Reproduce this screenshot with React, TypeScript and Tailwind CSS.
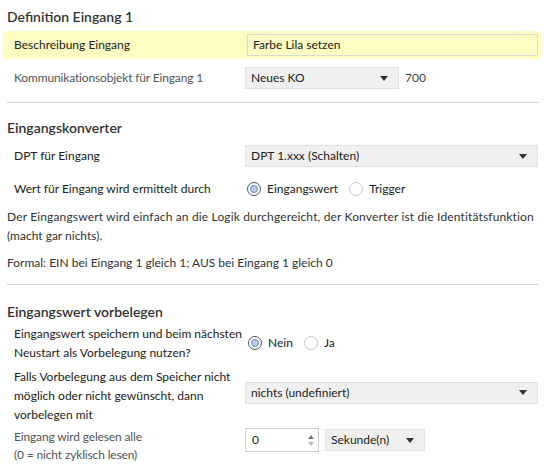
import React from "react";

const font = { fontFamily: 'Lato, "Open Sans", sans-serif' };

function Arrow() {
  return (
    <svg width="8" height="5" viewBox="0 0 8 5" className="shrink-0">
      <path d="M0 0 L8 0 L4 5 Z" fill="#333" />
    </svg>
  );
}

function Select({ text, w }: { text: string; w: string }) {
  return (
    <div className={`${w} h-[22px] flex items-center justify-between bg-[#f0f0f0] border border-[#e2e2e2] pl-[5px] pr-[10px] text-[#222] whitespace-nowrap`}>
      <span>{text}</span>
      <Arrow />
    </div>
  );
}

function Radio({ checked, label }: { checked?: boolean; label: string }) {
  return (
    <div className="flex items-center gap-[6px]">
      {checked ? (
        <div className="w-[14px] h-[14px] rounded-full border border-[#4a5670] bg-white flex items-center justify-center">
          <div className="w-[8px] h-[8px] rounded-full bg-[#b7c9e6] border border-[#6d8cc4]" />
        </div>
      ) : (
        <div className="w-[14px] h-[14px] rounded-full border border-[#c8c8c8] bg-white" />
      )}
      <span className="text-[#222]">{label}</span>
    </div>
  );
}

export default function App() {
  return (
    <div className="w-[544px] h-[469px] bg-white overflow-hidden pt-[7px] text-[12px]" style={font}>
      <div className="pl-[7px] h-[20px] leading-[20px] text-[14px] font-semibold text-[#333]">Definition Eingang 1</div>

      <div className="mt-[4px] mx-[3px] h-[28px] rounded-[3px] bg-[#fdfcc3] flex items-center">
        <div className="w-[244px] pl-[11px] text-[#222] whitespace-nowrap">Beschreibung Eingang</div>
        <div className="w-[291px] h-[22px] border border-[#dcdcd0] flex items-center pl-[5px] text-[#222]">Farbe Lila setzen</div>
      </div>

      <div className="mt-[5px] mx-[3px] h-[28px] flex items-center">
        <div className="w-[242px] pl-[11px] text-[#555] whitespace-nowrap tracking-[-0.15px]">Kommunikationsobjekt für Eingang 1</div>
        <Select text="Neues KO" w="w-[154px]" />
        <span className="ml-[6px] text-[#444]">700</span>
      </div>

      <div className="mt-[10px] mx-[7px] h-px bg-[#d2d2d2] w-[531px]" />

      <div className="mt-[15px] pl-[7px] h-[20px] leading-[20px] text-[14px] font-semibold text-[#333]">Eingangskonverter</div>

      <div className="mt-[4px] mx-[3px] h-[28px] flex items-center">
        <div className="w-[242px] pl-[11px] text-[#222] whitespace-nowrap">DPT für Eingang</div>
        <Select text="DPT 1.xxx (Schalten)" w="w-[293px]" />
      </div>

      <div className="mt-[5px] mx-[3px] h-[28px] flex items-center">
        <div className="w-[244px] pl-[11px] text-[#222] whitespace-nowrap">Wert für Eingang wird ermittelt durch</div>
        <div className="flex items-center gap-[11px]">
          <Radio checked label="Eingangswert" />
          <Radio label="Trigger" />
        </div>
      </div>

      <div className="mt-[4px] px-[7px] leading-[19px] text-[#333] whitespace-nowrap">
        <span className="tracking-[0.15px]">Der Eingangswert wird einfach an die Logik durchgereicht, der Konverter ist die Identitätsfunktion</span>
        <br />
        (macht gar nichts).
      </div>

      <div className="mt-[8px] px-[7px] leading-[19px] text-[#333] whitespace-nowrap">
        Formal: EIN bei Eingang 1 gleich 1; AUS bei Eingang 1 gleich 0
      </div>

      <div className="mt-[12px] mx-[7px] h-px bg-[#d2d2d2] w-[531px]" />

      <div className="mt-[17px] pl-[7px] h-[20px] leading-[20px] text-[14px] font-semibold text-[#333]">Eingangswert vorbelegen</div>

      <div className="mt-[2px] mx-[3px] flex items-center">
        <div className="w-[245px] pl-[11px] leading-[19px] text-[#222] whitespace-nowrap">
          Eingangswert speichern und beim nächsten
          <br />
          Neustart als Vorbelegung nutzen?
        </div>
        <div className="flex items-center gap-[11px]">
          <Radio checked label="Nein" />
          <Radio label="Ja" />
        </div>
      </div>

      <div className="mt-[5px] mx-[3px] flex items-center">
        <div className="w-[242px] pl-[11px] leading-[19px] text-[#222] whitespace-nowrap">
          Falls Vorbelegung aus dem Speicher nicht
          <br />
          möglich oder nicht gewünscht, dann
          <br />
          vorbelegen mit
        </div>
        <div className="-mt-[6px]">
          <Select text="nichts (undefiniert)" w="w-[293px]" />
        </div>
      </div>

      <div className="mt-[4px] mx-[3px] flex items-start">
        <div className="w-[242px] pl-[11px] leading-[18px] text-[#555] whitespace-nowrap tracking-[-0.15px]">
          Eingang wird gelesen alle
          <br />
          (0 = nicht zyklisch lesen)
        </div>
        <div className="w-[74px] h-[24px] border border-[#d0d0d0] flex items-center justify-between pl-[6px] pr-[4px] text-[#222]">
          <span>0</span>
          <div className="flex flex-col items-center gap-[3px]">
            <svg width="6" height="4" viewBox="0 0 6 4"><path d="M0 4 L3 0 L6 4 Z" fill="#777" /></svg>
            <svg width="6" height="4" viewBox="0 0 6 4"><path d="M0 0 L3 4 L6 0 Z" fill="#bbb" /></svg>
          </div>
        </div>
        <div className="ml-[6px] mt-[1px]">
          <Select text="Sekunde(n)" w="w-[100px]" />
        </div>
      </div>
    </div>
  );
}
